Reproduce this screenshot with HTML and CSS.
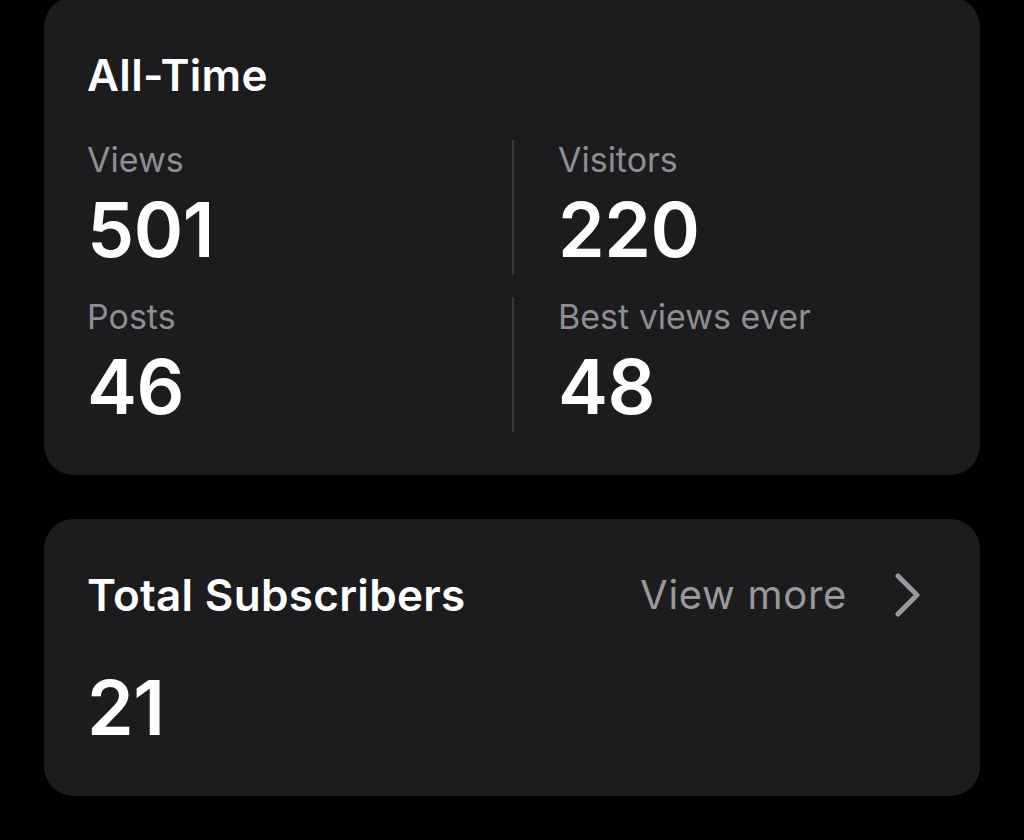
FILE: index.html
```html
<!DOCTYPE html>
<html lang="en">
<head>
<meta charset="utf-8">
<title>Stats</title>
<link rel="stylesheet" href="styles.css">
</head>
<body>
<main class="page">
  <section class="card card-alltime">
    <h2 class="card-title">All-Time</h2>
    <div class="stats-grid">
      <div class="stat">
        <div class="stat-label">Views</div>
        <div class="stat-value">501</div>
      </div>
      <div class="stat stat-right">
        <div class="stat-label">Visitors</div>
        <div class="stat-value">220</div>
      </div>
      <div class="stat">
        <div class="stat-label">Posts</div>
        <div class="stat-value">46</div>
      </div>
      <div class="stat stat-right">
        <div class="stat-label">Best views ever</div>
        <div class="stat-value">48</div>
      </div>
    </div>
  </section>

  <section class="card card-subs">
    <div class="card-head">
      <h2 class="card-title">Total Subscribers</h2>
      <a class="view-more" href="#">
        <span>View more</span>
        <svg class="chevron" width="28" height="44" viewBox="0 0 28 44" aria-hidden="true">
          <path d="M4 3 L23 22 L4 41" fill="none" stroke="currentColor" stroke-width="5" stroke-linecap="round" stroke-linejoin="round"/>
        </svg>
      </a>
    </div>
    <div class="stat-value subs-value">21</div>
  </section>
</main>
</body>
</html>
```

FILE: styles.css
```css
* { box-sizing: border-box; }

html, body {
  margin: 0;
  padding: 0;
  background: #000;
}

body {
  font-family: Inter, "Noto Sans", "Liberation Sans", sans-serif;
  color: #fff;
  width: 1024px;
  height: 840px;
  overflow: hidden;
}

.page {
  display: flex;
  flex-direction: column;
  gap: 44px;
  padding: 0 44px 0 44px;
  margin-top: -3px;
}

.card {
  background: #1c1c1e;
  border-radius: 30px;
  width: 936px;
}

.card-alltime {
  padding: 52px 45px 43px 43px;
}

.card-title {
  margin: 0;
  font-size: 44px;
  line-height: 52px;
  font-weight: 600;
  letter-spacing: 0.3px;
  color: #fff;
}

.stats-grid {
  margin-top: 39px;
  display: grid;
  grid-template-columns: 425px 1fr;
  row-gap: 22px;
}

.stat {
  display: flex;
  flex-direction: column;
  gap: 10px;
  height: 135px;
}

.stat-right {
  border-left: 2px solid #38383a;
  padding-left: 44px;
}

.stat-label {
  font-size: 34px;
  line-height: 40px;
  font-weight: 400;
  color: #8e8e93;
  letter-spacing: 0;
}

.stat-value {
  font-size: 75px;
  line-height: 80px;
  font-weight: 600;
  letter-spacing: -0.5px;
  color: #fff;
}

.card-subs {
  padding: 50px 45px 48px 43px;
}

.card-head {
  display: flex;
  align-items: center;
  justify-content: space-between;
}

.view-more {
  display: flex;
  align-items: center;
  gap: 47px;
  color: #98989d;
  text-decoration: none;
  font-size: 40px;
  line-height: 52px;
  font-weight: 400;
  letter-spacing: 0.7px;
  margin-right: 13px;
}

.chevron {
  display: block;
  color: #98989d;
}

.subs-value {
  margin-top: 47px;
}
```
